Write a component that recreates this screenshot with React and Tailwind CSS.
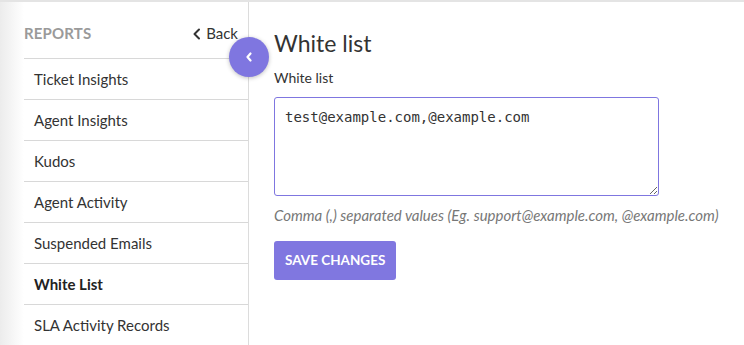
import React from 'react';

const items = [
    'Ticket Insights',
    'Agent Insights',
    'Kudos',
    'Agent Activity',
    'Suspended Emails',
    'White List',
    'SLA Activity Records',
];

const App = () => {
    return (
        <div className="w-[744px] h-[345px] overflow-hidden bg-white border-t-2 border-[#e4e4e4] flex text-[#333]" style={{ fontFamily: 'Lato, "Source Sans Pro", sans-serif' }}>
            <div className="w-6 shrink-0 bg-gradient-to-r from-[#ececec] to-white" />
            <aside className="relative w-[225px] shrink-0 border-r border-[#dcdcdc]">
                <div className="flex items-center justify-between h-[56px] pt-[7px]">
                    <span className="text-[15px] font-bold text-[#9a9a9a] tracking-[0.01em]">REPORTS</span>
                    <span className="flex items-center gap-1 pr-[10px] text-[15px] text-[#333]">
                        <svg width="10" height="12" viewBox="0 0 10 12" fill="none" stroke="#333" strokeWidth="2" strokeLinecap="round" strokeLinejoin="round">
                            <path d="M7 1.5L2.5 6 7 10.5" />
                        </svg>
                        Back
                    </span>
                </div>
                <ul>
                    {items.map((item) => (
                        <li
                            key={item}
                            className={`h-[41px] flex items-center pl-[10px] border-t border-[#d8d8d8] text-[15px] ${item === 'White List' ? 'font-bold text-[#222]' : 'text-[#333]'}`}
                        >
                            {item}
                        </li>
                    ))}
                </ul>
                <button className="absolute right-[-21px] top-[35px] w-10 h-10 rounded-full bg-[#7f76e0] shadow-[0_1px_4px_rgba(0,0,0,0.25)] flex items-center justify-center">
                    <svg width="8" height="10" viewBox="0 0 8 10" fill="none" stroke="white" strokeWidth="2.2" strokeLinecap="round" strokeLinejoin="round">
                        <path d="M5.5 1.5L2.5 5 5.5 8.5" />
                    </svg>
                </button>
            </aside>
            <main className="pl-[25px] pt-[26px] flex-1">
                <h1 className="text-[23px] leading-[30px] text-[#333]">White list</h1>
                <label className="block mt-[9px] text-[14px] text-[#333]">White list</label>
                <textarea
                    defaultValue="test@example.com,@example.com"
                    className="block mt-[9px] w-[385px] h-[99px] rounded-[3px] border border-[#7f76e0] px-[10px] pt-[9px] pb-[6px] text-[14px] leading-[20px] text-[#333] outline-none"
                    style={{ fontFamily: '"DejaVu Sans Mono", monospace' }}
                />
                <p className="mt-[8px] text-[15px] italic text-[#777]">Comma (,) separated values (Eg. support@example.com, @example.com)</p>
                <button className="mt-[14px] h-[39px] px-[11px] rounded-[3px] bg-[#8077e0] text-white text-[13.5px] font-bold">SAVE CHANGES</button>
            </main>
        </div>
    );
};

export default App;
